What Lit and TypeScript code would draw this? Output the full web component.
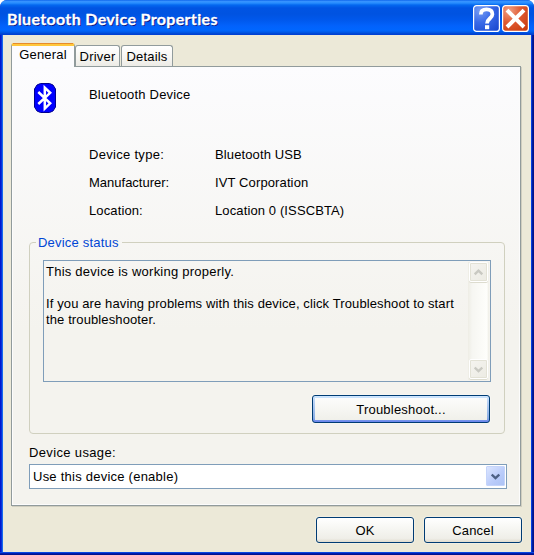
import { LitElement, html, css, svg } from "lit";
import { customElement, property } from "lit/decorators.js";

@customElement("xp-button")
class XpButton extends LitElement {
  @property() label = "";
  @property({ type: Boolean, reflect: true }) active = false;

  static styles = css`
    :host { display: block; box-sizing: border-box; }
    .btn {
      display: block; box-sizing: border-box; width: 100%; height: 100%;
      margin: 0; padding: 1px 0 0; border: 1px solid #003c74; border-radius: 3px;
      background: linear-gradient(#fff, #f5f5f1 50%, #efeee8 85%, #e0dccf);
      box-shadow: 0 0 0 1px rgba(255, 255, 255, 0.25);
      font: inherit; letter-spacing: inherit; color: #000;
    }
    :host([active]) .btn {
      background:
        linear-gradient(#fcfcfb, #f0f0ea) 2px 2px / calc(100% - 4px) calc(100% - 4px) no-repeat,
        linear-gradient(#cee7ff, #bcd4f6 20%, #89ade4 85%, #6982ee);
    }
  `;

  render() {
    return html`<button class="btn">${this.label}</button>`;
  }
}

const chevron = (up: boolean, color: string) => html`
  <svg width="9" height="7" viewBox="0 0 9 7" fill="none" stroke=${color} stroke-width="2.4">
    ${up ? svg`<path d="M0.7 5.3 4.5 1.7 8.3 5.3"/>` : svg`<path d="M0.7 1.5 4.5 5.1 8.3 1.5"/>`}
  </svg>`;

@customElement("app-root")
class AppRoot extends LitElement {
  static styles = css`
    :host {
      display: block; width: 534px; height: 555px; overflow: hidden;
      font: 13px/16px "Liberation Sans", Arial, sans-serif; color: #000; background: #fff;
    }
    * { box-sizing: border-box; }
    .window {
      width: 534px; height: 555px; display: flex; flex-direction: column;
      border-radius: 7px 7px 0 0; overflow: hidden;
      background: linear-gradient(90deg, #0019cf 0 1px, #0831d9 1px 2px, #166aee 2px 3px, #0855dd 3px 531px, #0540e0 531px 532px, #001ea0 532px 533px, #00138c 533px);
    }
    .titlebar {
      height: 35px; flex: none; display: flex; align-items: center; padding: 2px 5px 0 7px; gap: 2px;
      background: linear-gradient(#0058e6 0, #3a93ff 1px, #288eff 3px, #0468f0 5px, #0054e3 8px, #0053e1 14px, #0058ec 20px, #0262fc 26px, #0066ff 30px, #005bea 32px, #0043cf 34px, #003dd7 35px);
    }
    .title {
      flex: 1; font: bold 16px/20px Lato, "Open Sans", sans-serif; color: #fff;
      text-shadow: 1px 1px 0 #0a1883; white-space: nowrap; letter-spacing: 0.34px;
      -webkit-text-stroke: 0.3px #fff;
    }
    .caption { width: 27px; height: 27px; flex: none; display: block; }
    .client {
      height: 517px; margin: 0 3px; background: #ece9d8; display: flex; flex-direction: column;
      padding: 8px 9px 0 8px;
    }
    .bottom { height: 3px; background: linear-gradient(#0848e0 0 1px, #001cb0 1px 2px, #00138c 2px); }
    .tabs { height: 23px; display: flex; align-items: flex-end; }
    .tab {
      height: 21px; border: 1px solid #919b9c; border-bottom: 0; border-radius: 3px 3px 0 0;
      background: linear-gradient(#fff, #f6f5f1 60%, #ecebe6); text-align: center; line-height: 21px;
      white-space: nowrap; letter-spacing: 0.2px;
    }
    .driver { width: 45px; }
    .details { width: 52px; margin-left: 1px; }
    .general {
      width: 64px; height: 24px; margin-bottom: -1px; position: relative; line-height: 18px;
      background: #fcfcfe; border-top: 3px solid #ffc73c;
    }
    .general::before {
      content: ""; position: absolute; left: 1px; right: 1px; top: -3px; height: 1px; background: #e68b2c;
    }
    .panel {
      height: 440px; border: 1px solid #919b9c; padding: 15px 13px 0 17px; width: 510px;
      background: linear-gradient(#fcfcfe, #f4f3ee 60%, #f4f3ee);
      box-shadow: inset 0 0 0 1px #fcfcfc, 1px 1px 0 #d0cebf;
    }
    .identity { display: flex; height: 60px; padding-left: 5px; }
    .icon { width: 22px; height: 30px; margin-top: 1px; }
    .name { margin: 5px 0 0 33px; letter-spacing: 0.2px; }
    .facts {
      display: grid; grid-template-columns: 126px 1fr; grid-auto-rows: 28px; margin: 0;
      padding: 5px 0 0 60px; height: 91px; white-space: nowrap; letter-spacing: 0.12px;
    }
    .facts dd, .facts dt { margin: 0; }
    .wide { letter-spacing: 0.3px; }
    .flat { letter-spacing: 0; }
    .group {
      margin: 0; padding: 0; border: 1px solid #d0d0bf; border-radius: 4px; width: 476px;
      height: 200px; margin-top: 1px;
    }
    .legend { color: #0046d5; margin-left: 6px; padding: 1px 3px 0 2px; height: 16px; letter-spacing: 0.2px; }
    .status {
      width: 448px; height: 122px; margin: 10px 0 0 13px; border: 1px solid #7f9db9;
      display: flex; white-space: nowrap;
    }
    .message { flex: 1; padding: 3px 0 0 2px; margin: 0; letter-spacing: 0.115px; }
    .lead { letter-spacing: 0.24px; }
    .scroll {
      width: 21px; margin-top: 1px; height: 118px; display: flex; flex-direction: column;
      justify-content: space-between; background: linear-gradient(90deg, #eeede5, #f6f6f2 20%, #fefefb 90%, #eeede5);
      padding: 0 1px 1px; margin-right: 1px;
    }
    .arrow {
      height: 20px; border: 1px solid #fff; border-radius: 2px; display: flex; align-items: center;
      justify-content: center; background: linear-gradient(135deg, #f5f4f0, #ecebe3);
      outline: 1px solid #e3e2d6; outline-offset: -2px; box-shadow: 0 1px 0 #dddccf;
    }
    .troubleshoot { width: 178px; height: 28px; margin: 13px 0 0 282px; letter-spacing: 0.22px; }
    .usage { margin-top: 11px; letter-spacing: 0.35px; }
    .combo {
      width: 478px; height: 25px; margin-top: 3px; border: 1px solid #7f9db9; background: #fff;
      display: flex; justify-content: space-between; padding: 1px 1px 1px 3px; line-height: 21px;
      letter-spacing: 0.24px;
    }
    .drop {
      width: 19px; height: 20px; border-radius: 1px; border: 1px solid #c5d4fa; display: flex;
      align-items: center; justify-content: center; background: linear-gradient(135deg, #dbe5ff, #b9cbfa 60%, #adc3f5);
    }
    .actions { display: flex; justify-content: flex-end; gap: 10px; margin-top: 11px; }
    .action { width: 98px; height: 26px; letter-spacing: 0.2px; }
  `;

  render() {
    return html`
      <div class="window">
        <header class="titlebar">
          <div class="title">Bluetooth Device Properties</div>
          <svg class="caption" viewBox="0 0 27 27">
            <defs><radialGradient id="h" cx=".25" cy=".2" r="1"><stop stop-color="#789df2"/><stop offset=".45" stop-color="#3b6be8"/><stop offset="1" stop-color="#1948d0"/></radialGradient></defs>
            <rect x=".6" y=".6" width="25.8" height="25.8" rx="3" fill="url(#h)" stroke="#fff" stroke-width="1.2"/>
            <path d="M7.8 9.6C7.8 5.8 10 4.4 13.6 4.4s5.8 1.6 5.8 4.8c0 4.2-5.4 4.4-5.4 9.2" fill="none" stroke="#fff" stroke-width="3.8"/>
            <rect x="12" y="20.2" width="4.2" height="4" fill="#fff"/>
          </svg>
          <svg class="caption" viewBox="0 0 27 27">
            <defs><radialGradient id="c" cx=".25" cy=".2" r="1"><stop stop-color="#f0a085"/><stop offset=".45" stop-color="#e05a32"/><stop offset="1" stop-color="#c83a0c"/></radialGradient></defs>
            <rect x=".6" y=".6" width="25.8" height="25.8" rx="3" fill="url(#c)" stroke="#fff" stroke-width="1.2"/>
            <path d="M5 5.2 22 22M22 5.2 5 22" fill="none" stroke="#fff" stroke-width="4"/>
          </svg>
        </header>
        <main class="client">
          <nav class="tabs">
            <div class="tab general">General</div>
            <div class="tab driver">Driver</div>
            <div class="tab details">Details</div>
          </nav>
          <section class="panel">
            <div class="identity">
              <svg class="icon" viewBox="0 0 22 30">
                <path d="M6.5 .5H15.5L19 2L21.5 6V24L19 28L15.5 29.5H6.5L3 28L.5 24V6L3 2Z" fill="#00f" stroke="#000090"/>
                <path d="M4.3 9 16.2 20.3 10.8 25.6V4.6L16.2 9.8 4.3 21" fill="none" stroke="#fff" stroke-width="2.5"/>
              </svg>
              <div class="name">Bluetooth Device</div>
            </div>
            <dl class="facts">
              <dt class="wide">Device type:</dt><dd>Bluetooth USB</dd>
              <dt class="flat">Manufacturer:</dt><dd>IVT Corporation</dd>
              <dt>Location:</dt><dd>Location 0 (ISSCBTA)</dd>
            </dl>
            <fieldset class="group">
              <legend class="legend">Device status</legend>
              <div class="status">
                <p class="message"><span class="lead">This device is working properly.</span><br /><br />If you are having problems with this device, click Troubleshoot to start<br />the troubleshooter.</p>
                <div class="scroll">
                  <div class="arrow">${chevron(true, "#c9c9c2")}</div>
                  <div class="arrow">${chevron(false, "#c9c9c2")}</div>
                </div>
              </div>
              <xp-button class="troubleshoot" label="Troubleshoot..." active></xp-button>
            </fieldset>
            <div class="usage">Device usage:</div>
            <div class="combo"><span>Use this device (enable)</span><div class="drop">${chevron(false, "#4d6185")}</div></div>
          </section>
          <footer class="actions">
            <xp-button class="action" label="OK"></xp-button>
            <xp-button class="action" label="Cancel"></xp-button>
          </footer>
        </main>
        <div class="bottom"></div>
      </div>`;
  }
}
